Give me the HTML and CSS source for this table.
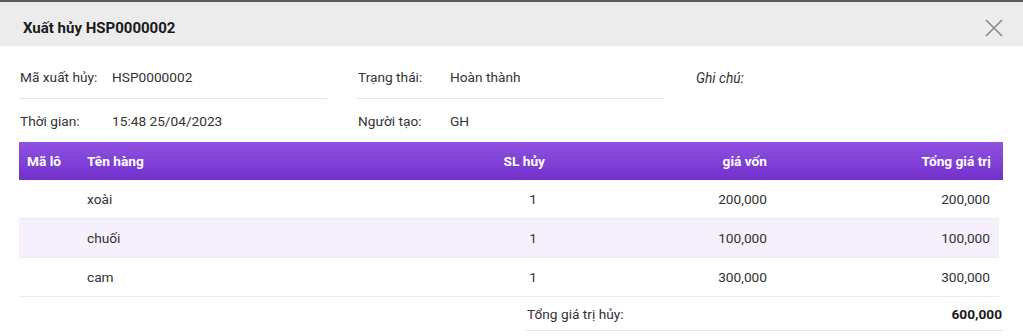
FILE: index.html
```html
<!DOCTYPE html>
<html lang="vi">
<head>
<meta charset="utf-8">
<link rel="stylesheet" href="styles.css">
</head>
<body>
<div class="modal">
  <div class="modal-head">
    <h1 class="title">Xuất hủy HSP0000002</h1>
    <svg class="close" width="18" height="18" viewBox="0 0 18 18"><path d="M1 1 L17 17 M17 1 L1 17" stroke="#8a8a8a" stroke-width="1.6" fill="none"/></svg>
  </div>
  <div class="modal-body">
    <div class="info">
      <div class="field line"><span class="lbl">Mã xuất hủy:</span><span class="val">HSP0000002</span></div>
      <div class="field line"><span class="lbl">Trạng thái:</span><span class="val">Hoàn thành</span></div>
      <div class="field"><span class="lbl note">Ghi chú:</span></div>
      <div class="field"><span class="lbl">Thời gian:</span><span class="val">15:48 25/04/2023</span></div>
      <div class="field"><span class="lbl">Người tạo:</span><span class="val">GH</span></div>
      <div class="field"></div>
    </div>
    <div class="grid-table">
      <div class="thead row">
        <div class="c c1">Mã lô</div>
        <div class="c c2">Tên hàng</div>
        <div class="c c3">SL hủy</div>
        <div class="c c4">giá vốn</div>
        <div class="c c5">Tổng giá trị</div>
      </div>
      <div class="tbody">
        <div class="row tr"><div class="c c1"></div><div class="c c2">xoài</div><div class="c c3">1</div><div class="c c4">200,000</div><div class="c c5">200,000</div></div>
        <div class="row tr alt"><div class="c c1"></div><div class="c c2">chuối</div><div class="c c3">1</div><div class="c c4">100,000</div><div class="c c5">100,000</div></div>
        <div class="row tr"><div class="c c1"></div><div class="c c2">cam</div><div class="c c3">1</div><div class="c c4">300,000</div><div class="c c5">300,000</div></div>
      </div>
    </div>
    <div class="summary">
      <span class="sum-lbl">Tổng giá trị hủy:</span>
      <span class="sum-val">600,000</span>
    </div>
  </div>
</div>
</body>
</html>
```
FILE: styles.css
```css
* { box-sizing: border-box; }
html, body { margin: 0; padding: 0; background: #fff; }
body { font-family: Roboto, "Noto Sans", sans-serif; font-size: 13.7px; color: #333; }
.modal { width: 1023px; }
.modal-head {
  border-top: 2px solid #5c5c5c;
  background: #ececec;
  height: 46px;
  display: flex;
  align-items: flex-start;
  justify-content: space-between;
  padding: 16px 20px 0 23px;
}
.title { margin: 0; font-size: 15px; font-weight: 700; line-height: 20px; color: #1b1b1b; }
.close { margin-top: 1px; }
.modal-body { padding: 10px 20px 0 19px; }
.info {
  display: grid;
  grid-template-columns: repeat(3, 308px);
  column-gap: 30px;
}
.field { display: flex; height: 43px; align-items: center; }
.field.line { height: 43px; border-bottom: 1px solid #e4e4e4; }
.lbl { width: 93px; padding-left: 1px; color: #333; flex: none; }
.lbl.note { font-style: italic; }
.val { color: #333; }
.row {
  display: grid;
  grid-template-columns: 60px 1fr 200px 222px 228px;
}
.thead {
  height: 38px;
  align-items: center;
  color: #fff;
  font-weight: 700;
  background: linear-gradient(#9152e1, #7230cc);
}
.thead .c1 { padding-left: 8px; }
.thead .c2 { padding-left: 8px; }
.thead .c3 { text-align: right; padding-right: 8px; }
.thead .c4 { text-align: right; padding-right: 8px; }
.thead .c5 { text-align: right; padding-right: 12px; }
.tbody { width: 980px; }
.tr {
  grid-template-columns: 60px 1fr 200px 222px 224px;
  height: 39px;
  align-items: center;
  border-bottom: 1px solid #ececec;
}
.tr.alt { background: #f6effc; }
.tr .c2 { padding-left: 8px; }
.tr .c3 { text-align: right; padding-right: 16px; }
.tr .c4 { text-align: right; padding-right: 8px; }
.tr .c5 { text-align: right; padding-right: 9px; }
.summary {
  margin-left: 507px;
  height: 34px;
  display: flex;
  align-items: center;
  justify-content: space-between;
  border-bottom: 1px solid #e2e2e2;
  padding: 0 1px 0 1px;
}
.sum-val { font-weight: 700; color: #1b1b1b; }
```
